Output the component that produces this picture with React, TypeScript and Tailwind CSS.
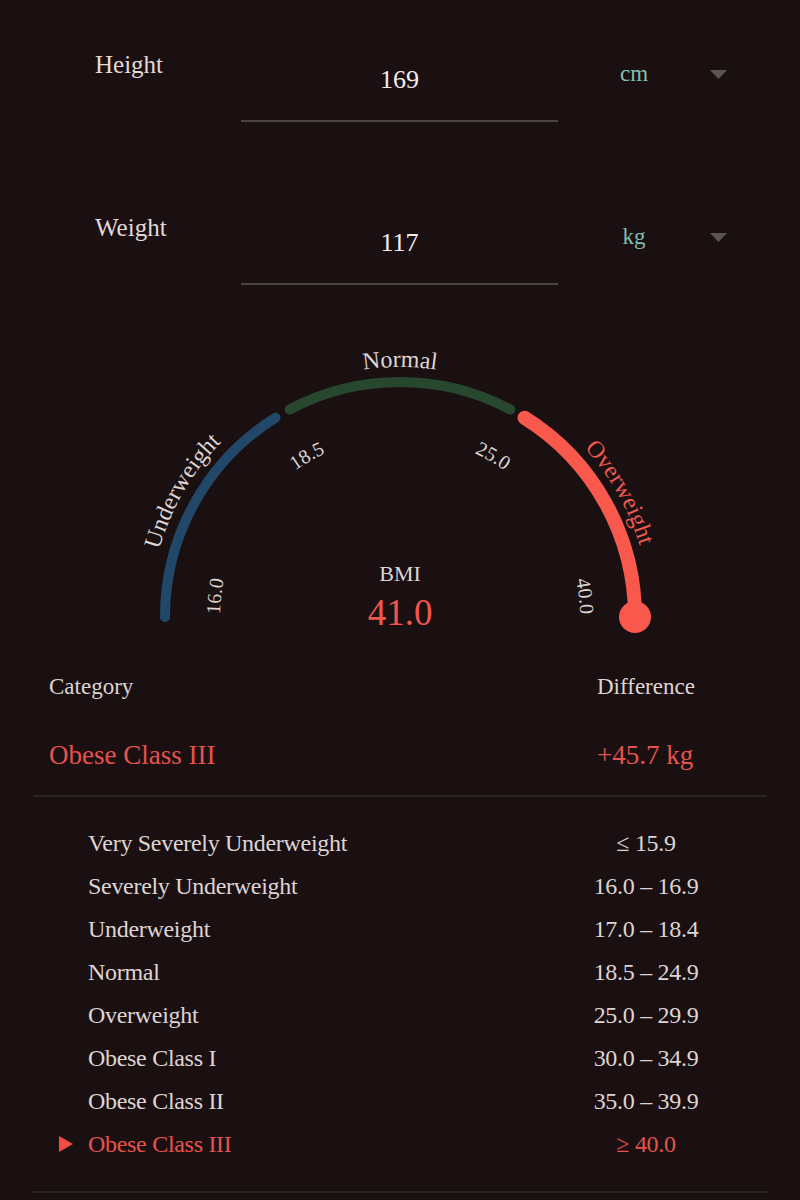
import React from 'react'

const CX = 400
const CY = 332

function pt(a: number, r: number): [number, number] {
  const rad = (a * Math.PI) / 180
  return [CX + r * Math.cos(rad), CY - r * Math.sin(rad)]
}

function arc(a1: number, a2: number, r: number) {
  const [x1, y1] = pt(a1, r)
  const [x2, y2] = pt(a2, r)
  return `M ${x1} ${y1} A ${r} ${r} 0 0 1 ${x2} ${y2}`
}

function halfCircle(r: number) {
  const [x1, y1] = pt(180, r)
  const [x2, y2] = pt(90, r)
  const [x3, y3] = pt(0, r)
  return `M ${x1} ${y1} A ${r} ${r} 0 0 1 ${x2} ${y2} A ${r} ${r} 0 0 1 ${x3} ${y3}`
}

const ranges = [
  { name: 'Very Severely Underweight', range: '≤ 15.9' },
  { name: 'Severely Underweight', range: '16.0 – 16.9' },
  { name: 'Underweight', range: '17.0 – 18.4' },
  { name: 'Normal', range: '18.5 – 24.9' },
  { name: 'Overweight', range: '25.0 – 29.9' },
  { name: 'Obese Class I', range: '30.0 – 34.9' },
  { name: 'Obese Class II', range: '35.0 – 39.9' },
  { name: 'Obese Class III', range: '≥ 40.0', active: true },
]

function Caret() {
  return (
    <svg width="17" height="9" viewBox="0 0 17 9" className="block">
      <polygon points="0,0 17,0 8.5,9" fill="#5c5354" />
    </svg>
  )
}

function InputRow({ label, value, unit }: { label: string; value: string; unit: string }) {
  return (
    <div className="flex">
      <div className="w-[241px] pl-[95px] pt-[50px]">
        <div className="text-[25px] leading-[30px] text-[#e2d9d9]">{label}</div>
      </div>
      <div className="w-[317px] h-[122px] pt-[65px] border-b-2 border-[#4b4243]">
        <div className="text-center text-[26px] leading-[30px] text-[#f3eeee]">{value}</div>
      </div>
      <div className="flex items-center pl-[46px] pt-[59px] h-[89px]">
        <div className="w-[60px] text-center text-[23px] leading-[30px] text-[#82bfb0]">{unit}</div>
        <div className="ml-[46px]">
          <Caret />
        </div>
      </div>
    </div>
  )
}

function Gauge() {
  return (
    <svg width="800" height="375" viewBox="0 0 800 375" className="block">
      <defs>
        <path id="outer" d={halfCircle(250)} />
        <path id="inner" d={halfCircle(180)} />
      </defs>
      <path d={arc(180, 122, 235)} stroke="#214869" strokeWidth="10" strokeLinecap="round" fill="none" />
      <path d={arc(118, 62, 235)} stroke="#27482e" strokeWidth="10" strokeLinecap="round" fill="none" />
      <path d={arc(58, 0, 235)} stroke="#f9584c" strokeWidth="14" strokeLinecap="round" fill="none" />
      <circle cx={CX + 235} cy={CY} r="16" fill="#f9584c" />

      <text fontSize="24" fill="#ddd4d4">
        <textPath href="#outer" startOffset="16.67%" textAnchor="middle">
          Underweight
        </textPath>
      </text>
      <text fontSize="24" fill="#ddd4d4">
        <textPath href="#outer" startOffset="50%" textAnchor="middle">
          Normal
        </textPath>
      </text>
      <text fontSize="24" fill="#ef5a50">
        <textPath href="#outer" startOffset="83.6%" textAnchor="middle">
          Overweight
        </textPath>
      </text>

      <text fontSize="20" fill="#ddd4d4">
        <textPath href="#inner" startOffset="0.5%" textAnchor="start">
          16.0
        </textPath>
      </text>
      <text fontSize="20" fill="#ddd4d4">
        <textPath href="#inner" startOffset="33.33%" textAnchor="middle">
          18.5
        </textPath>
      </text>
      <text fontSize="20" fill="#ddd4d4">
        <textPath href="#inner" startOffset="66.67%" textAnchor="middle">
          25.0
        </textPath>
      </text>
      <text fontSize="20" fill="#ddd4d4">
        <textPath href="#inner" startOffset="99.5%" textAnchor="end">
          40.0
        </textPath>
      </text>

      <text x={CX} y="296" fontSize="22" fill="#ddd4d4" textAnchor="middle">
        BMI
      </text>
      <text x={CX} y="340" fontSize="37" fill="#f0564d" textAnchor="middle">
        41.0
      </text>
    </svg>
  )
}

export default function App() {
  return (
    <div className="w-[800px] min-h-[1200px] bg-[#1b1011] font-['Liberation_Serif',serif] text-[#ddd4d4]">
      <InputRow label="Height" value="169" unit="cm" />
      <div className="mt-[41px]">
        <InputRow label="Weight" value="117" unit="kg" />
      </div>

      <Gauge />

      <div className="pt-[12px]">
        <div className="grid grid-cols-[548px_1fr] pl-[49px] text-[23px] leading-[30px] text-[#ddd4d4]">
          <div>Category</div>
          <div>Difference</div>
        </div>
        <div className="mt-[38px] grid grid-cols-[548px_1fr] pl-[49px] text-[27px] leading-[30px] text-[#e5534c]">
          <div>Obese Class III</div>
          <div>+45.7 kg</div>
        </div>
        <div className="mt-[25px] mx-[33px] h-[2px] bg-[#2c2324]" />
      </div>

      <div className="pt-[24px]">
        {ranges.map((r) => (
          <div
            key={r.name}
            className={`flex h-[43px] items-center text-[24px] tracking-[-0.3px] ${r.active ? 'text-[#e5534c]' : 'text-[#ddd4d4]'}`}
          >
            <div className="w-[88px] flex justify-end pr-[15px]">
              {r.active && (
                <svg width="14" height="16" viewBox="0 0 14 16" className="block">
                  <polygon points="0,0 14,8 0,16" fill="#f24a45" />
                </svg>
              )}
            </div>
            <div className="w-[470px] leading-[30px]">{r.name}</div>
            <div className="w-[176px] text-center leading-[30px]">{r.range}</div>
          </div>
        ))}
        <div className="mt-[26px] mx-[33px] h-[2px] bg-[#2c2324]" />
      </div>
    </div>
  )
}
